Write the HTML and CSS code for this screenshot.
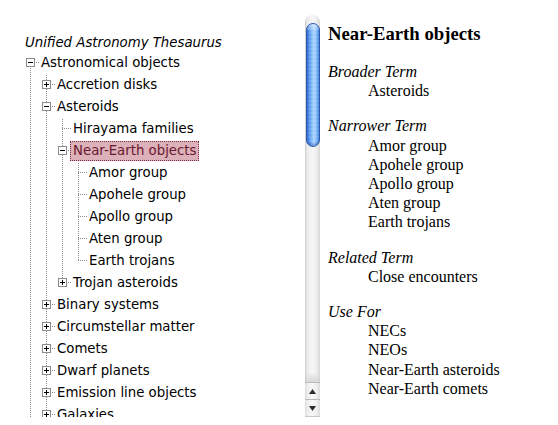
FILE: index.html
```html
<!DOCTYPE html>
<html lang="en">
<head>
<meta charset="utf-8">
<title>Unified Astronomy Thesaurus</title>
<link rel="stylesheet" href="styles.css">
</head>
<body>
<div class="layout">
  <div class="pane">
    <div class="tree-view">
      <div class="caption">Unified Astronomy Thesaurus</div>
      <ul class="tree">
        <li class="node root">
          <div class="row"><span class="tog"><span class="box minus"></span></span><span class="label">Astronomical objects</span></div>
          <ul>
            <li class="node"><div class="row"><span class="tog"><span class="box plus"></span></span><span class="label">Accretion disks</span></div></li>
            <li class="node">
              <div class="row"><span class="tog"><span class="box minus"></span></span><span class="label">Asteroids</span></div>
              <ul>
                <li class="node"><div class="row"><span class="tog"></span><span class="label">Hirayama families</span></div></li>
                <li class="node">
                  <div class="row"><span class="tog"><span class="box minus"></span></span><span class="label selected">Near-Earth objects</span></div>
                  <ul>
                    <li class="node"><div class="row"><span class="tog"></span><span class="label">Amor group</span></div></li>
                    <li class="node"><div class="row"><span class="tog"></span><span class="label">Apohele group</span></div></li>
                    <li class="node"><div class="row"><span class="tog"></span><span class="label">Apollo group</span></div></li>
                    <li class="node"><div class="row"><span class="tog"></span><span class="label">Aten group</span></div></li>
                    <li class="node last"><div class="row"><span class="tog"></span><span class="label">Earth trojans</span></div></li>
                  </ul>
                </li>
                <li class="node last"><div class="row"><span class="tog"><span class="box plus"></span></span><span class="label">Trojan asteroids</span></div></li>
              </ul>
            </li>
            <li class="node"><div class="row"><span class="tog"><span class="box plus"></span></span><span class="label">Binary systems</span></div></li>
            <li class="node"><div class="row"><span class="tog"><span class="box plus"></span></span><span class="label">Circumstellar matter</span></div></li>
            <li class="node"><div class="row"><span class="tog"><span class="box plus"></span></span><span class="label">Comets</span></div></li>
            <li class="node"><div class="row"><span class="tog"><span class="box plus"></span></span><span class="label">Dwarf planets</span></div></li>
            <li class="node"><div class="row"><span class="tog"><span class="box plus"></span></span><span class="label">Emission line objects</span></div></li>
            <li class="node"><div class="row"><span class="tog"><span class="box plus"></span></span><span class="label">Galaxies</span></div></li>
          </ul>
        </li>
      </ul>
    </div>
    <div class="scrollbar">
      <div class="sb-track"><div class="sb-thumb"></div></div>
      <div class="sb-btn"><svg width="7" height="5" viewBox="0 0 7 5"><polygon points="3.5,0 7,5 0,5" fill="#2b2b2b"/></svg></div>
      <div class="sb-btn"><svg width="7" height="5" viewBox="0 0 7 5"><polygon points="0,0 7,0 3.5,5" fill="#2b2b2b"/></svg></div>
    </div>
  </div>
  <div class="detail">
    <h3>Near-Earth objects</h3>
    <dl>
      <dt>Broader Term</dt>
      <dd>Asteroids</dd>
    </dl>
    <dl>
      <dt>Narrower Term</dt>
      <dd>Amor group</dd>
      <dd>Apohele group</dd>
      <dd>Apollo group</dd>
      <dd>Aten group</dd>
      <dd>Earth trojans</dd>
    </dl>
    <dl>
      <dt>Related Term</dt>
      <dd>Close encounters</dd>
    </dl>
    <dl>
      <dt>Use For</dt>
      <dd>NECs</dd>
      <dd>NEOs</dd>
      <dd>Near-Earth asteroids</dd>
      <dd>Near-Earth comets</dd>
    </dl>
  </div>
</div>
</body>
</html>
```
FILE: styles.css
```css
html, body {
  margin: 0;
  background: #fff;
}

body {
  font-family: "DejaVu Sans", Verdana, sans-serif;
  color: #000;
}

.layout {
  display: flex;
  align-items: flex-start;
  gap: 8px;
  padding: 15px 0 0 8px;
}

/* ---------- left: tree pane ---------- */
.pane {
  display: flex;
  width: 312px;
  height: 402px;
  flex: none;
}

.tree-view {
  flex: 1;
  overflow: hidden;
  padding: 17px 0 0 14px;
}

.caption {
  font-style: italic;
  font-size: 13.3px;
  line-height: 21px;
  height: 21px;
  padding-left: 3px;
  white-space: nowrap;
}

.tree,
.tree ul {
  list-style: none;
  margin: 0;
  padding: 0;
}

.tree ul {
  margin-left: 16px;
}

.node {
  --dots-v: repeating-linear-gradient(to bottom, #8e8e8e 0 1px, transparent 1px 2px);
  --dots-h: repeating-linear-gradient(to right, #8e8e8e 0 1px, transparent 1px 2px);
  background-image: var(--dots-v), var(--dots-h);
  background-repeat: no-repeat;
  background-position: 8px 0, 8px 9px;
  background-size: 1px 100%, 10px 1px;
}

.node.last {
  background-size: 1px 10px, 10px 1px;
}

.node.root {
  background-position: 8px 9px, 8px 9px;
}

.row {
  display: flex;
  align-items: flex-start;
  height: 22px;
  font-size: 13.3px;
  white-space: nowrap;
}

.tog {
  width: 16px;
  height: 22px;
  flex: none;
}

.box {
  display: block;
  box-sizing: border-box;
  width: 9px;
  height: 9px;
  margin: 5px 0 0 4px;
  border: 1px solid #8c8c8c;
  background-color: #fff;
  background-repeat: no-repeat;
}

.box.minus {
  background-image: linear-gradient(#000, #000);
  background-size: 5px 1px;
  background-position: 1px 3px;
}

.box.plus {
  background-image: linear-gradient(#000, #000), linear-gradient(#000, #000);
  background-size: 5px 1px, 1px 5px;
  background-position: 1px 3px, 3px 1px;
}

.label {
  line-height: 18px;
  padding: 0 2px;
  border: 1px dotted transparent;
}

.label.selected {
  background: #dcb1b9;
  border-color: #7d2945;
  color: #6a1830;
}

/* ---------- fake aqua scrollbar ---------- */
.scrollbar {
  width: 15px;
  flex: none;
  display: flex;
  flex-direction: column;
}

.sb-track {
  flex: 1;
  border-radius: 7px 7px 0 0;
  background:
    radial-gradient(ellipse 9px 10px at 50% 100%, rgba(0,0,0,0.13), rgba(0,0,0,0) 100%),
    linear-gradient(to right, #c3c3c3 0, #dedede 1px, #eeeeee 3px, #f7f7f7 8px, #ececec 12px, #d6d6d6 15px);
  padding-top: 8px;
}

.sb-thumb {
  box-sizing: border-box;
  width: 14px;
  height: 124px;
  margin-left: 1px;
  border: 1px solid #2a58ad;
  border-radius: 7px;
  background:
    linear-gradient(to bottom, rgba(255,255,255,0.55) 0, rgba(255,255,255,0) 8px),
    repeating-linear-gradient(to bottom, rgba(255,255,255,0.08) 0 2px, rgba(255,255,255,0) 2px 4px),
    linear-gradient(to right, #336fd6 0, #5191ec 2px, #86bdf8 5px, #acd4ff 7px, #8fc3fb 9px, #5e9cef 11px, #407edc 13px);
  box-shadow: inset 0 -2px 2px rgba(20, 50, 140, 0.35);
}

.sb-btn {
  height: 16px;
  border-top: 1px solid #b9b9b9;
  display: flex;
  align-items: center;
  justify-content: center;
  background: linear-gradient(to right, #d9d9d9 0, #ececec 2px, #f8f8f8 7px, #eeeeee 12px, #dcdcdc 15px);
}

.sb-btn:last-child {
  border-bottom: 1px solid #c8c8c8;
}

/* ---------- right: detail ---------- */
.detail {
  font-family: "Liberation Serif", "Times New Roman", serif;
  font-size: 16px;
  line-height: 19.2px;
  padding-top: 8px;
  white-space: nowrap;
}

.detail h3 {
  font-size: 18.72px;
  line-height: 22px;
  margin: 0 0 17px;
}

.detail dl {
  margin: 0 0 16px;
}

.detail dt {
  font-style: italic;
}

.detail dd {
  margin-left: 40px;
}
```
